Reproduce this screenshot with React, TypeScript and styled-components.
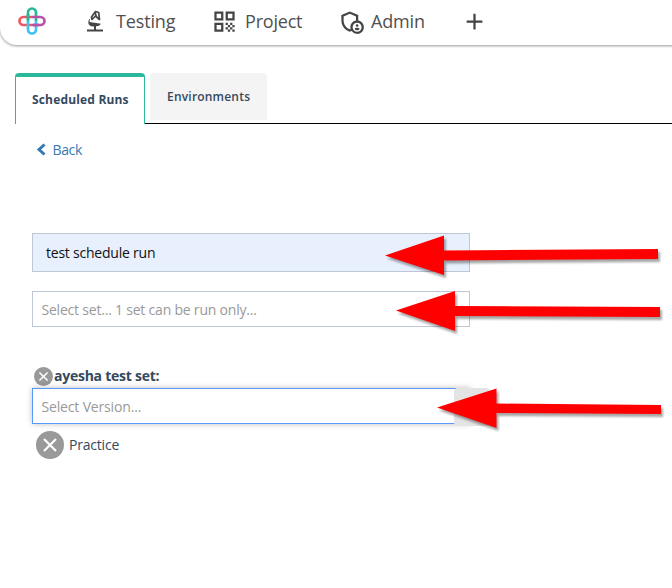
import React from "react";
import styled, { createGlobalStyle } from "styled-components";
import { MdQrCode, MdOutlineAdminPanelSettings, MdAdd } from "react-icons/md";

const GlobalStyle = createGlobalStyle`
  * { box-sizing: border-box; }
  body { margin: 0; background: #fff; overflow: hidden; }
`;

const Page = styled.div`
  position: relative;
  width: 672px;
  height: 588px;
  overflow: hidden;
  background: #fff;
  font-family: "Open Sans", sans-serif;
  color: #34495e;
  white-space: nowrap;
`;

const TopBar = styled.header`
  display: flex;
  align-items: center;
  width: 712px;
  height: 45px;
  padding: 0 0 3px 17px;
  border-radius: 0 0 0 17px;
  background: #fff;
  box-shadow: 0 1px 3px rgba(0, 0, 0, 0.4);
`;

const NavItem = styled.div<{ $width: number; $gap: number; $track?: number }>`
  display: flex;
  align-items: center;
  width: ${(p) => p.$width}px;
  gap: ${(p) => p.$gap}px;
  font-size: 18px;
  line-height: 24px;
  letter-spacing: ${(p) => p.$track ?? 0}px;
  color: #505050;
  svg { flex: none; color: #444; }
`;

const TabStrip = styled.nav`
  display: flex;
  align-items: flex-start;
  height: 51px;
  margin: 28px 0 0 15px;
`;

const ActiveTab = styled.div`
  width: 130px;
  height: 51px;
  padding: 15px 0 0 16px;
  border: 1px solid #2bb99a;
  border-top-width: 4px;
  border-bottom: 0;
  border-radius: 4px 4px 0 0;
  font-size: 12px;
  line-height: 16px;
  font-weight: 700;
  letter-spacing: 0.17px;
`;

const TabRest = styled.div`
  flex: 1;
  height: 51px;
  padding-left: 5px;
  border-bottom: 1px solid #000;
`;

const Tab = styled.div`
  width: 117px;
  height: 47px;
  padding: 16px 0 0 17px;
  border-radius: 4px 4px 0 0;
  background: #f4f4f4;
  font-size: 12px;
  line-height: 16px;
  font-weight: 600;
  letter-spacing: 0.2px;
`;

const BackLink = styled.a`
  display: flex;
  align-items: center;
  gap: 7px;
  height: 20px;
  margin: 15px 0 0 35.500px;
  color: #337ab7;
  font-size: 14px;
  letter-spacing: -0.35px;
`;

const Form = styled.main`
  display: flex;
  flex-direction: column;
  width: 438px;
  margin: 74px 0 0 32px;
`;

const NameField = styled.div`
  height: 39px;
  padding: 0 13px;
  border: 1px solid #bdc7d5;
  background: #e8f0fe;
  color: #111;
  font-size: 14px;
  line-height: 37px;
  letter-spacing: -0.22px;
`;

const SelectField = styled.div`
  height: 36px;
  margin-top: 19px;
  padding: 0 8.500px;
  border: 1px solid #bdc7d5;
  color: #999;
  font-size: 14px;
  line-height: 35px;
  letter-spacing: -0.21px;
`;

const SetTitle = styled.div`
  display: flex;
  align-items: center;
  gap: 1.500px;
  height: 20px;
  margin: 39px 0 0 1.500px;
  font-size: 14px;
  line-height: 18px;
  font-weight: 700;
  letter-spacing: -0.25px;
`;

const VersionRow = styled.div`
  display: flex;
  width: 438px;
  height: 36px;
  margin-top: 2px;
  box-shadow: 0 0 6px rgba(0, 0, 0, 0.25);
`;

const VersionField = styled.div`
  flex: none;
  width: 424px;
  height: 36px;
  padding: 0 8.500px;
  border: 1px solid #5897fb;
  border-right: 0;
  background: #fff;
  color: #999;
  font-size: 14px;
  line-height: 35px;
  letter-spacing: -0.16px;
`;

const VersionButton = styled.div`
  flex: none;
  width: 36px;
  height: 38px;
  margin: 0 0 0 -2px;
  border-radius: 4px;
  background: #e4e4e4;
`;

const Choice = styled.div`
  display: flex;
  align-items: center;
  gap: 5px;
  height: 28px;
  margin: 7px 0 0 4px;
  font-size: 14px;
  letter-spacing: -0.2px;
  span { margin-top: -2px; }
`;

const ArrowLayer = styled.svg`
  position: absolute;
  inset: 0;
  pointer-events: none;
  filter: drop-shadow(2px 3px 1px rgba(0, 0, 0, 0.35));
`;

const Logo = () => (
  <svg width="30" height="30" viewBox="0 0 30 30" fill="none" strokeWidth="2.700">
    <path d="M11 15V6.500a4 4 0 0 1 8 0V15" stroke="#25b99a" />
    <path d="M15 11H6.500a4 4 0 0 0 0 8H15" stroke="#f2555e" />
    <path d="M15 11h8.500a4 4 0 0 1 0 8H15" stroke="#b852a5" />
    <path d="M11 15v8.500a4 4 0 0 0 8 0V15" stroke="#3fc3f5" />
    <path d="M11 8v6" stroke="#25b99a" />
    <path d="M16 19h6" stroke="#b852a5" />
  </svg>
);

const Microscope = () => (
  <svg width="17" height="22" viewBox="0 0 17 22" fill="none" stroke="#444" strokeWidth="2">
    <path d="M0 20.500h16M8 20v-4" />
    <path d="M3 8.500C.2 11 .8 16.500 6 16.500c4 0 7-.5 8-2.700L2.500 12Z" fill="#444" stroke="none" />
    <path d="M4.500 7 8.500 1.500l3.200 1L12.500 9.500 8.500 6 5 9.500Z" strokeWidth="1.700" strokeLinejoin="round" />
    <path d="m8.200 2.500 1 4" strokeWidth="1.700" />
  </svg>
);

const Remove = ({ size }: { size: number }) => (
  <svg width={size} height={size} viewBox="0 0 28 28">
    <circle cx="14" cy="14" r="14" fill="#999" />
    <path d="m8 8 12 12M20 8 8 20" stroke="#fff" strokeWidth="2.200" />
  </svg>
);

const arrows = [
  "385,255.500 444,235.500 444,250.500 658,249 658,259 444,260.500 444,275",
  "396,310.500 455,291 455,306 660,307 660,317 455,316 455,331",
  "437,407.500 496.500,388.500 496.500,403.500 661,405 661,414 496.500,413 496.500,428",
];

export default function App() {
  return (
    <>
      <GlobalStyle />
      <Page>
        <TopBar>
          <NavItem $width={70} $gap={0}><Logo /></NavItem>
          <NavItem $width={124} $gap={12} $track={-0.15}><Microscope />Testing</NavItem>
          <NavItem $width={127} $gap={7} $track={-0.2}><MdQrCode size={27} />Project</NavItem>
          <NavItem $width={123} $gap={6} $track={-0.15}><MdOutlineAdminPanelSettings size={27} />Admin</NavItem>
          <NavItem $width={30} $gap={0}><MdAdd size={27} /></NavItem>
        </TopBar>
        <TabStrip>
          <ActiveTab>Scheduled Runs</ActiveTab>
          <TabRest><Tab>Environments</Tab></TabRest>
        </TabStrip>
        <BackLink>
          <svg width="10" height="13" viewBox="0 0 10 13">
            <path d="M8.500 1.500 3 6.500l5.500 5" fill="none" stroke="#337ab7" strokeWidth="3" />
          </svg>
          Back
        </BackLink>
        <Form>
          <NameField>test schedule run</NameField>
          <SelectField>Select set... 1 set can be run only...</SelectField>
          <SetTitle><Remove size={19} /><span>ayesha test set:</span></SetTitle>
          <VersionRow>
            <VersionField>Select Version...</VersionField>
            <VersionButton />
          </VersionRow>
          <Choice><Remove size={28} /><span>Practice</span></Choice>
        </Form>
        <ArrowLayer width="672" height="588" viewBox="0 0 672 588">
          {arrows.map((points) => <polygon key={points} points={points} fill="#f00" />)}
        </ArrowLayer>
      </Page>
    </>
  );
}
